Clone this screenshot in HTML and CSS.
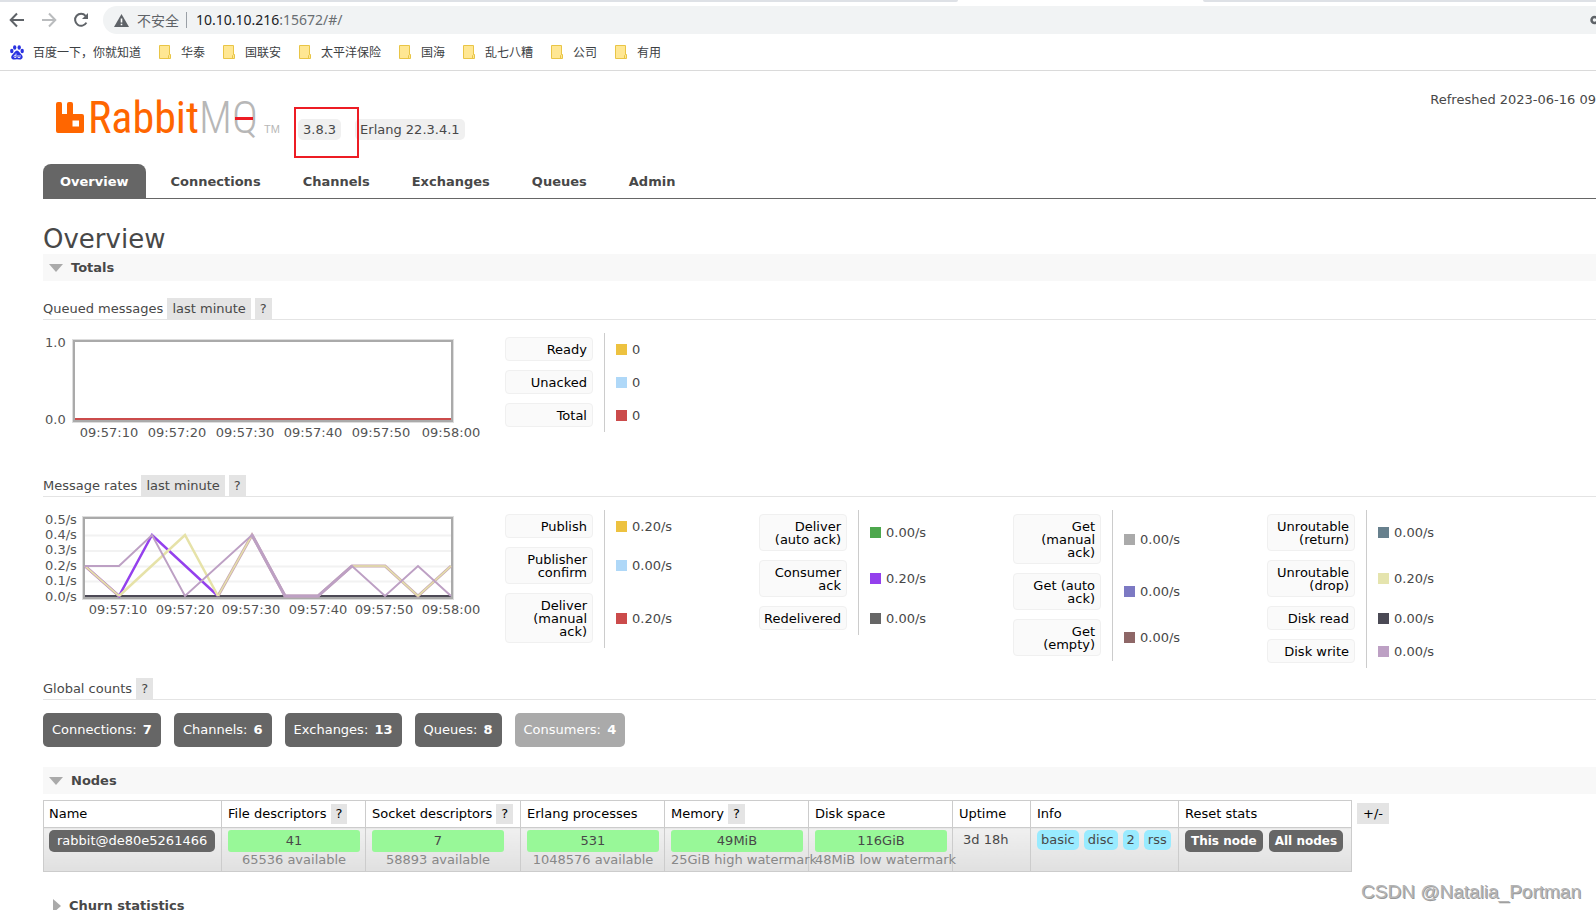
FILE: index.html
```html
<!DOCTYPE html>
<html lang="en">
<head>
<meta charset="utf-8">
<title>RabbitMQ Management</title>
<link rel="stylesheet" href="styles.css">
</head>
<body>
<div class="browser">
  <div class="tabstrip"><span class="strip strip-left"></span><span class="strip strip-right"></span></div>
  <div class="toolbar">
    <button class="nav-btn" aria-label="Back"><svg width="16" height="16" viewBox="0 0 16 16"><path d="M15 8H2M8 1.5L1.7 8L8 14.500" fill="none" stroke="#5f6368" stroke-width="2"/></svg></button>
    <button class="nav-btn" aria-label="Forward"><svg width="16" height="16" viewBox="0 0 16 16"><path d="M1 8H14M8 1.500L14.300 8L8 14.500" fill="none" stroke="#babcbe" stroke-width="2"/></svg></button>
    <button class="nav-btn" aria-label="Reload"><svg width="16" height="16" viewBox="0 0 16 16"><path d="M13.400 10.600A6 6 0 1 1 12.600 3.800" fill="none" stroke="#5f6368" stroke-width="2"/><path d="M15 1V7H9Z" fill="#5f6368"/></svg></button>
    <div class="address">
      <svg width="15" height="13" viewBox="0 0 15 13"><path d="M7.500 0L15 13H0Z" fill="#5f6368"/><path d="M6.700 4.500H8.300V8.500H6.700ZM6.700 9.700H8.300V11.300H6.700Z" fill="#fff"/></svg>
      <span class="insecure">不安全</span>
      <span class="url"><b>10.10.10.216</b>:15672/#/</span>
      <svg class="key" width="6" height="10" viewBox="0 0 6 10"><circle cx="4.500" cy="5" r="3" fill="none" stroke="#5f6368" stroke-width="2.500"/></svg>
    </div>
  </div>
  <nav class="bookmarks">
    <a href="#" class="first"><svg width="14" height="15" viewBox="0 0 14 15" fill="#2932e1"><ellipse cx="4.700" cy="2.500" rx="1.700" ry="2.300"/><ellipse cx="9.200" cy="2.500" rx="1.700" ry="2.300"/><ellipse cx="1.800" cy="6" rx="1.700" ry="2.200"/><ellipse cx="12.200" cy="6" rx="1.700" ry="2.200"/><path d="M7 5.500C9 5.500 9.600 8 11.500 9.500C14 12 12 15 9.500 14.500Q7 14 4.500 14.500C1.500 15 0 12 2.500 9.500C4.400 8 5 5.500 7 5.500Z"/><path d="M6 8.500V12.500H4.500Q3.500 11.500 4.500 10.300H6M8 10V12.500H10V10" fill="none" stroke="#fff" stroke-width=".8"/></svg>百度一下，你就知道</a>
    <a href="#"><svg class="folder" width="12" height="14" viewBox="0 0 12 14"><path d="M.5 .5H10.500V9.500H11.500V13.500H.5Z" fill="#ffe793" stroke="#e9c546"/><path d="M9.500 13V10.500L10.500 9.500" fill="none" stroke="#e9c546"/></svg>华泰</a>
    <a href="#"><svg class="folder" width="12" height="14" viewBox="0 0 12 14"><path d="M.5 .5H10.500V9.500H11.500V13.500H.5Z" fill="#ffe793" stroke="#e9c546"/><path d="M9.500 13V10.500L10.500 9.500" fill="none" stroke="#e9c546"/></svg>国联安</a>
    <a href="#"><svg class="folder" width="12" height="14" viewBox="0 0 12 14"><path d="M.5 .5H10.500V9.500H11.500V13.500H.5Z" fill="#ffe793" stroke="#e9c546"/><path d="M9.500 13V10.500L10.500 9.500" fill="none" stroke="#e9c546"/></svg>太平洋保险</a>
    <a href="#"><svg class="folder" width="12" height="14" viewBox="0 0 12 14"><path d="M.5 .5H10.500V9.500H11.500V13.500H.5Z" fill="#ffe793" stroke="#e9c546"/><path d="M9.500 13V10.500L10.500 9.500" fill="none" stroke="#e9c546"/></svg>国海</a>
    <a href="#"><svg class="folder" width="12" height="14" viewBox="0 0 12 14"><path d="M.5 .5H10.500V9.500H11.500V13.500H.5Z" fill="#ffe793" stroke="#e9c546"/><path d="M9.500 13V10.500L10.500 9.500" fill="none" stroke="#e9c546"/></svg>乱七八糟</a>
    <a href="#"><svg class="folder" width="12" height="14" viewBox="0 0 12 14"><path d="M.5 .5H10.500V9.500H11.500V13.500H.5Z" fill="#ffe793" stroke="#e9c546"/><path d="M9.500 13V10.500L10.500 9.500" fill="none" stroke="#e9c546"/></svg>公司</a>
    <a href="#"><svg class="folder" width="12" height="14" viewBox="0 0 12 14"><path d="M.5 .5H10.500V9.500H11.500V13.500H.5Z" fill="#ffe793" stroke="#e9c546"/><path d="M9.500 13V10.500L10.500 9.500" fill="none" stroke="#e9c546"/></svg>有用</a>
  </nav>
</div>

<div class="page">
  <header class="header">
    <a href="#" class="logo" aria-label="RabbitMQ">
      <svg width="230" height="56" viewBox="0 -8 230 56">
        <path d="M2 4Q2 2 4 2H6.500Q8 2 8 4V14H13V4Q13 2 15 2H17Q19 2 19 4V14H28Q30 14 30 16V31Q30 33 28 33H4Q2 33 2 31ZM18.500 20.500V26.500H25V20.500Z" fill="#f60" fill-rule="evenodd"/>
        <text x="34" y="33" class="logo-text logo-rabbit">Rabbit</text>
        <text x="145" y="33" class="logo-text logo-mq">MQ</text>
        <text x="210" y="33" class="logo-tm">TM</text>
        <path d="M181 18.500H199" stroke="#ed1c24" stroke-width="3"/>
      </svg>
    </a>
    <div class="versions">
      <span class="version">3.8.3</span><span class="version">Erlang 22.3.4.1</span>
      <span class="highlight"></span>
    </div>
    <div class="refreshed">Refreshed 2023-06-16 09</div>
  </header>
  <nav class="tabs">
    <a href="#" class="active">Overview</a><a href="#">Connections</a><a href="#">Channels</a><a href="#">Exchanges</a><a href="#">Queues</a><a href="#">Admin</a>
  </nav>
  <main>
    <h1>Overview</h1>
    <h2><svg width="14" height="8" viewBox="0 0 14 8"><path d="M0 0H14L7 8Z" fill="#aaa"/></svg>Totals</h2>

    <h3 class="sub">Queued messages <button class="tag">last minute</button><button class="tag help">?</button></h3>
    <div class="stats">
      <svg class="chart" width="460" height="112" viewBox="0 0 460 112">
        <rect x="30.500" y="7.500" width="379" height="81" fill="#fff" stroke="#ddd" stroke-width="3"/>
        <rect x="31" y="8" width="378" height="80" fill="#fff" stroke="#aaa" stroke-width="2"/>
        <path d="M32 86H408" stroke="#cb4b4b" stroke-width="2"/>
        <g><text x="2" y="14">1.0</text><text x="2" y="91">0.0</text></g>
        <g text-anchor="middle"><text x="66" y="104">09:57:10</text><text x="134" y="104">09:57:20</text><text x="202" y="104">09:57:30</text><text x="270" y="104">09:57:40</text><text x="338" y="104">09:57:50</text><text x="408" y="104">09:58:00</text></g>
      </svg>
      <div class="legends">
        <table class="legend">
          <tr><th><a href="#">Ready</a></th><td><i class="c-yellow"></i>0</td></tr>
          <tr><th><a href="#">Unacked</a></th><td><i class="c-blue"></i>0</td></tr>
          <tr><th><a href="#">Total</a></th><td><i class="c-red"></i>0</td></tr>
        </table>
      </div>
    </div>

    <h3 class="sub rates">Message rates <button class="tag">last minute</button><button class="tag help">?</button></h3>
    <div class="stats stats-rates">
      <svg class="chart" width="460" height="112" viewBox="0 0 460 112">
        <rect x="40.500" y="7.500" width="369" height="81" fill="#fff" stroke="#ddd" stroke-width="3"/>
        <rect x="41" y="8" width="368" height="80" fill="#fff" stroke="#aaa" stroke-width="2"/>
        <path d="M42 25.500H408M42 41H408M42 56.500H408M42 71.500H408" stroke="#f2f2f2" stroke-width="2"/>
        <g fill="none" stroke-width="2">
          <path d="M42 86H408" stroke="#4d4a56"/>
          <path d="M42 56L76 86L109 25L175 86" stroke="#9440ed" stroke-width="2.500"/>
          <path d="M42 56L76 86M175 86L209 25L242 86H275L309 56H342L375 86L408 56" stroke="#c9a9b5" stroke-width="3"/>
          <path d="M76 86L142 25L175 86" stroke="#e6e2a8" stroke-width="2.500"/>
          <path d="M42 56L76 86M175 86L209 25M309 56H342L375 86L408 56" stroke="#e6e2a8" stroke-width="1.500"/>
          <path d="M209 25L242 86H275L309 56" stroke="#bda0c1" stroke-width="3"/>
          <path d="M42 56H76L109 25L142 86L209 25L242 86H275L309 56L342 86L375 56L408 86" stroke="#bda0c4"/>
        </g>
        <g><text x="2" y="14">0.5/s</text><text x="2" y="29">0.4/s</text><text x="2" y="44">0.3/s</text><text x="2" y="60">0.2/s</text><text x="2" y="75">0.1/s</text><text x="2" y="91">0.0/s</text></g>
        <g text-anchor="middle"><text x="75" y="104">09:57:10</text><text x="142" y="104">09:57:20</text><text x="208" y="104">09:57:30</text><text x="275" y="104">09:57:40</text><text x="341" y="104">09:57:50</text><text x="408" y="104">09:58:00</text></g>
      </svg>
      <div class="legends">
        <table class="legend">
          <tr><th><a href="#">Publish</a></th><td><i class="c-yellow"></i>0.20/s</td></tr>
          <tr><th><a href="#">Publisher<br>confirm</a></th><td><i class="c-blue"></i>0.00/s</td></tr>
          <tr><th><a href="#">Deliver<br>(manual<br>ack)</a></th><td><i class="c-red"></i>0.20/s</td></tr>
        </table>
        <table class="legend">
          <tr><th><a href="#">Deliver<br>(auto ack)</a></th><td><i class="c-green"></i>0.00/s</td></tr>
          <tr><th><a href="#">Consumer<br>ack</a></th><td><i class="c-purple"></i>0.20/s</td></tr>
          <tr><th><a href="#">Redelivered</a></th><td><i class="c-dark"></i>0.00/s</td></tr>
        </table>
        <table class="legend">
          <tr><th><a href="#">Get<br>(manual<br>ack)</a></th><td><i class="c-grey"></i>0.00/s</td></tr>
          <tr><th><a href="#">Get (auto<br>ack)</a></th><td><i class="c-indigo"></i>0.00/s</td></tr>
          <tr><th><a href="#">Get<br>(empty)</a></th><td><i class="c-brown"></i>0.00/s</td></tr>
        </table>
        <table class="legend">
          <tr><th><a href="#">Unroutable<br>(return)</a></th><td><i class="c-slate"></i>0.00/s</td></tr>
          <tr><th><a href="#">Unroutable<br>(drop)</a></th><td><i class="c-sand"></i>0.20/s</td></tr>
          <tr><th><a href="#">Disk read</a></th><td><i class="c-ink"></i>0.00/s</td></tr>
          <tr><th><a href="#">Disk write</a></th><td><i class="c-mauve"></i>0.00/s</td></tr>
        </table>
      </div>
    </div>

    <h3 class="sub">Global counts <button class="tag">?</button></h3>
    <div class="counts">
      <a href="#">Connections: <b>7</b></a><a href="#">Channels: <b>6</b></a><a href="#">Exchanges: <b>13</b></a><a href="#">Queues: <b>8</b></a><span>Consumers: <b>4</b></span>
    </div>

    <h2><svg width="14" height="8" viewBox="0 0 14 8"><path d="M0 0H14L7 8Z" fill="#aaa"/></svg>Nodes</h2>
    <div class="nodes-wrap">
      <table class="nodes">
        <colgroup><col class="w-name"><col class="w-stat"><col class="w-socket"><col class="w-stat"><col class="w-stat"><col class="w-stat"><col class="w-uptime"><col class="w-info"><col class="w-reset"></colgroup>
        <thead><tr><th>Name</th><th>File descriptors <button class="tag">?</button></th><th>Socket descriptors <button class="tag">?</button></th><th>Erlang processes</th><th>Memory <button class="tag">?</button></th><th>Disk space</th><th>Uptime</th><th>Info</th><th>Reset stats</th></tr></thead>
        <tbody><tr>
          <td><a href="#" class="node">rabbit@de80e5261466</a></td>
          <td><div class="bar">41</div><div class="limit">65536 available</div></td>
          <td><div class="bar">7</div><div class="limit">58893 available</div></td>
          <td><div class="bar">531</div><div class="limit">1048576 available</div></td>
          <td><div class="bar">49MiB</div><div class="limit long">25GiB high watermark</div></td>
          <td><div class="bar">116GiB</div><div class="limit long">48MiB low watermark</div></td>
          <td class="uptime">3d 18h</td>
          <td><div class="chips"><span>basic</span><span>disc</span><span>2</span><span>rss</span></div></td>
          <td><div class="resets"><button class="node">This node</button><button class="node">All nodes</button></div></td>
        </tr></tbody>
      </table>
      <button class="tag columns">+/-</button>
    </div>

    <h2 class="closed"><svg width="8" height="14" viewBox="0 0 8 14"><path d="M0 0V14L8 7Z" fill="#aaa"/></svg>Churn statistics</h2>
  </main>
</div>
<div class="watermark">CSDN @Natalia_Portman</div>
</body>
</html>
```
FILE: styles.css
```css
* { box-sizing: border-box; }
html { height: 100%; }
body {
  margin: 0; position: relative; height: 100%; overflow: hidden;
  background: #fff; color: #484848;
  font: 13px/20px Verdana, "DejaVu Sans", "Noto Sans CJK SC", sans-serif;
}
a { color: inherit; text-decoration: none; }
button { border: 0; margin: 0; padding: 0; background: none; color: inherit; font: inherit; }
svg { display: block; flex: none; }

.browser { border-bottom: 1px solid #dadada; font-family: "Noto Sans CJK SC", sans-serif; }
.tabstrip { display: flex; justify-content: space-between; height: 6px; }
.strip { height: 2px; background: #dee1e6; }
.strip-left { width: 60%; border-bottom-right-radius: 4px; }
.strip-right { width: 393px; border-bottom-left-radius: 4px; }
.toolbar { display: flex; align-items: center; height: 28px; padding-left: 9px; gap: 16px; }
.nav-btn { width: 16px; height: 16px; }
.address {
  flex: 1; display: flex; align-items: center; height: 28px; margin-left: -2px; padding-left: 11px;
  border-radius: 14px 0 0 14px; background: #f1f3f4; color: #5f6368;
}
.insecure { margin-left: 8px; padding-right: 7px; border-right: 1px solid #9aa0a6; font-size: 14px; line-height: 16px; }
.url { margin-left: 9px; font: 14px/20px "Noto Sans", sans-serif; color: #6a6e72; }
.url b { font-weight: 400; color: #202124; }
.key { margin-left: auto; }
.bookmarks { display: flex; align-items: center; height: 36px; padding-left: 10px; gap: 18px; color: #3c4043; font-size: 12px; }
.bookmarks a { display: flex; align-items: center; gap: 10px; }
.bookmarks .first { gap: 9px; }

.page { padding-left: 43px; }
.header { display: flex; height: 93px; white-space: nowrap; }
.logo { margin: 21px 0 0 11px; }
.logo-text { font: 44px "Liberation Sans Narrow", "Roboto Condensed", "Open Sans Condensed", sans-serif; }
.logo-rabbit { fill: #f60; }
.logo-mq { font-weight: 300; fill: #b7b7b7; }
.logo-tm { font: 11px "Liberation Sans", sans-serif; fill: #b7b7b7; }
.versions { position: relative; display: flex; align-items: flex-start; gap: 14px; margin: 48px 0 0 14px; }
.version { padding: 1px 5px 0; border-radius: 5px; background: #f0f0f0; line-height: 20px; }
.highlight { position: absolute; left: -4px; top: -12px; width: 65px; height: 51px; border: 2px solid #ed1c24; }
.refreshed { margin: 19px 0 0 auto; }

.tabs { display: flex; gap: 8px; border-bottom: 1px solid #666; font-weight: 700; }
.tabs a { padding: 8px 17px 6px; border-radius: 8px 8px 0 0; }
.tabs .active { background: #666; color: #fff; }

h1 { margin: 26px 0 0; font-size: 26px; line-height: 29px; font-weight: 400; }
h2 {
  display: flex; align-items: center; gap: 8px; height: 27px; margin: 0; padding-left: 6px;
  background: #f8f8f8; font-size: 13px; font-weight: 700;
}
.sub { display: flex; align-items: center; height: 22px; margin: 17px 0 0; border-bottom: 1px solid #e4e4e4; font-size: 13px; font-weight: 400; white-space: pre; }
.tag { height: 21px; padding: 0 5px; background: #e4e4e4; color: #484848; }
.help { margin-left: 4px; }

.stats { display: flex; margin-top: 13px; height: 125px; }
.stats-rates { height: auto; min-height: 158px; }
.chart { font-size: 13px; fill: #545454; }
.legends { display: flex; gap: 44px; align-items: flex-start; }
.legend { width: 210px; border-collapse: collapse; }
.legend th { width: 101px; padding: 4px 11px 5px 2px; font-weight: 400; }
.legend th a {
  display: block; width: 88px; padding: 5px 5px 4px 0; border: 1px solid #f0f0f0; border-radius: 4px;
  background: #fafafa; color: #000; line-height: 13px; text-align: right; white-space: nowrap;
}
.legend td { padding: 0 0 0 11px; border-left: 1px solid #ccc; }
.legend i { display: inline-block; width: 11px; height: 11px; margin-right: 5px; vertical-align: -1px; }
.c-yellow { background: #edc240; }
.c-blue { background: #afd8f8; }
.c-red { background: #cb4b4b; }
.c-green { background: #4da74d; }
.c-purple { background: #9440ed; }
.c-dark { background: #666; }
.c-grey { background: #aaa; }
.c-indigo { background: #7c79c3; }
.c-brown { background: #8e6767; }
.c-slate { background: #67808d; }
.c-sand { background: #e5e4ae; }
.c-ink { background: #4b4a55; }
.c-mauve { background: #bda0c4; }

.stats-rates + .sub { margin-top: 10px; }
.counts { display: flex; gap: 13px; margin: 13px 0 20px; color: #fff; }
.counts a, .counts span { padding: 7px 9px; border-radius: 5px; background: #666; }
.counts span { background: #aaa; }
.counts b { margin-left: 2px; }

.nodes-wrap { display: flex; align-items: flex-start; gap: 5px; margin-top: 6px; }
.nodes { table-layout: fixed; width: 1309px; border-collapse: collapse; }
.w-name { width: 178px; }
.w-stat { width: 144px; }
.w-socket { width: 155px; }
.w-uptime { width: 78px; }
.w-info { width: 148px; }
.w-reset { width: 173px; }
.nodes th, .nodes td { border: 1px solid #ccc; text-align: left; white-space: nowrap; vertical-align: top; }
.nodes th { height: 27px; padding: 3px 0 2px 6px; color: #000; font-weight: 400; }
.nodes th .tag { height: 20px; color: #000; }
.nodes td { height: 44px; padding: 2px 0 0 6px; background: linear-gradient(#f0f0f0, #e0e0e0); }
.nodes th:first-child, .nodes td:first-child { padding-left: 5px; }
.node { display: inline-block; padding: 0 8px; border-radius: 5px; background: #666; color: #fff; line-height: 22px; }
.bar { width: 132px; border-radius: 3px; background: #98f898; line-height: 22px; text-align: center; }
.limit { width: 132px; color: #888; line-height: 16px; text-align: center; }
.limit.long { text-align: left; }
.nodes .uptime { padding-left: 10px; }
.chips { display: flex; gap: 5px; }
.chips span { padding: 0 4px; border-radius: 5px; background: #99ebff; }
.resets { display: flex; gap: 6px; font-size: 12px; font-weight: 700; }
.resets .node { padding: 0 6px; }
.columns { margin-top: 3px; padding: 0 6px; color: #000; }
.closed { margin-top: 20px; padding-left: 10px; background: none; }
.watermark {
  position: absolute; right: 15px; bottom: 6px; color: #b4b4b4;
  font: 19px/24px "Liberation Sans", sans-serif; text-shadow: 1px 1px 0 #999;
}
```
